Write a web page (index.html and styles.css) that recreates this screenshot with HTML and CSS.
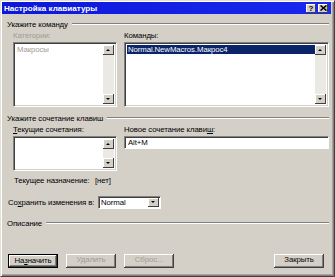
FILE: index.html
```html
<!DOCTYPE html>
<html lang="ru">
<head>
  <meta charset="UTF-8" />
  <title>Настройка клавиатуры</title>
  <link rel="stylesheet" href="styles.css">
</head>
<body>
  <div class="dialog">
    <div class="titlebar">
      <span class="title">Настройка клавиатуры</span>
      <div class="title-buttons">
        <span class="tbtn">?</span>
        <span class="tbtn close">
          <svg width="7" height="6" viewBox="0 0 7 6"><path d="M0.5 0.5L6.5 5.5M6.5 0.5L0.5 5.5" stroke="#000" stroke-width="1.6"/></svg>
        </span>
      </div>
    </div>

    <div class="content">
      <div class="group-head"><span>Укажите команду</span><i class="etch"></i></div>
      <div class="pair">
        <div class="col left">
          <div class="label disabled">Категории:</div>
          <div class="listbox tall">
            <div class="items"><div class="item disabled">Макросы</div></div>
            <div class="vscroll"><span class="arrow up"></span><span class="arrow down"></span></div>
          </div>
        </div>
        <div class="col right">
          <div class="label">Коман<u>д</u>ы:</div>
          <div class="listbox tall">
            <div class="items"><div class="item selected">Normal.NewMacros.Макрос4</div></div>
            <div class="vscroll"><span class="arrow up"></span><span class="arrow down"></span></div>
          </div>
        </div>
      </div>

      <div class="group-head second"><span>Укажите сочетание клавиш</span><i class="etch"></i></div>
      <div class="pair">
        <div class="col left">
          <div class="label"><u>Т</u>екущие сочетания:</div>
          <div class="listbox short">
            <div class="items"></div>
            <div class="vscroll"><span class="arrow up"></span><span class="arrow down"></span></div>
          </div>
        </div>
        <div class="col right">
          <div class="label">Новое сочетание клави<u>ш</u>:</div>
          <div class="textbox">Alt+M</div>
        </div>
      </div>
      <div class="assign"><span class="assign-label">Текущее назначение:</span><span>[нет]</span></div>

      <div class="save-row">
        <span class="save-label">Со<u>х</u>ранить изменения в:</span>
        <div class="select"><span>Normal</span><span class="drop"><span class="arrow down"></span></span></div>
      </div>

      <div class="group-head third"><span>Описание</span><i class="etch"></i></div>

      <div class="buttons">
        <span class="btn default">На<u>з</u>начить</span>
        <span class="btn disabled">Удалить</span>
        <span class="btn disabled">Сброс...</span>
        <span class="spacer"></span>
        <span class="btn">Закрыть</span>
      </div>
    </div>
  </div>
</body>
</html>
```

FILE: styles.css
```css
* {
  margin: 0;
  padding: 0;
  box-sizing: border-box;
}

body {
  font-family: 'Liberation Sans', Arial, sans-serif;
  font-size: 7.8px;
  letter-spacing: -0.1px;
  color: #000;
  background: #d4d0c8;
  white-space: nowrap;
}

u {
  text-decoration: underline;
}

.dialog {
  width: 335px;
  height: 277px;
  background: #d4d0c8;
  border: 1px solid;
  border-color: #e4e0d8 #404040 #404040 #e4e0d8;
  box-shadow: inset 1px 1px #fff, inset -1px -1px #808080, inset -2px -2px #a8a49c;
  padding: 1px 3px 3px 1px;
  display: flex;
  flex-direction: column;
}

.titlebar {
  height: 12px;
  background: linear-gradient(90deg, #0c18d8, #1a28f0);
  color: #fff;
  display: flex;
  align-items: center;
  justify-content: space-between;
  padding: 0 3px 0 2px;
}

.title {
  font-weight: bold;
  font-size: 8.1px;
  letter-spacing: 0;
}

.title-buttons {
  display: flex;
  gap: 2px;
}

.tbtn {
  width: 10px;
  height: 9px;
  background: #d4d0c8;
  color: #000;
  font-weight: bold;
  font-size: 8px;
  line-height: 9px;
  text-align: center;
  display: flex;
  align-items: center;
  justify-content: center;
  box-shadow: inset -1px -1px #404040, inset 1px 1px #fff;
}

.content {
  flex: 1;
  padding: 0 2px 0 5px;
  display: flex;
  flex-direction: column;
}

.group-head {
  height: 10px;
  margin-top: 5px;
  display: flex;
  align-items: center;
  gap: 4px;
}

.group-head.second {
  margin-top: 6px;
}

.group-head.third {
  margin-top: 9px;
}

.etch {
  flex: 1;
  height: 2px;
  border-top: 1px solid #808080;
  border-bottom: 1px solid #fff;
}

.pair {
  display: flex;
  gap: 7px;
  padding-left: 6px;
  margin-top: 2px;
}

.col.left {
  width: 104px;
  flex-shrink: 0;
}

.col.right {
  flex: 1;
}

.label {
  height: 10px;
  line-height: 10px;
  margin-bottom: 1px;
}

.disabled {
  color: #a09c94;
}

.listbox {
  display: flex;
  background: #fff;
  border: 1px solid;
  border-color: #808080 #fff #fff #808080;
  box-shadow: inset 1px 1px #404040, inset -1px -1px #d4d0c8;
  padding: 2px;
}

.listbox.tall {
  height: 65px;
}

.listbox.short {
  height: 35px;
}

.items {
  flex: 1;
}

.item {
  height: 9px;
  line-height: 9px;
  padding-left: 1px;
}

.item.selected {
  background: #0a246a;
  color: #fff;
}

.vscroll {
  width: 11px;
  background: #ebe9e4;
  display: flex;
  flex-direction: column;
  justify-content: space-between;
}

.arrow {
  display: block;
  width: 11px;
  height: 10px;
  background: #d4d0c8;
  box-shadow: inset -1px -1px #404040, inset 1px 1px #fff;
  position: relative;
}

.arrow::after {
  content: '';
  position: absolute;
  left: 3px;
  top: 4px;
  border-left: 2px solid transparent;
  border-right: 2px solid transparent;
}

.arrow.up::after {
  border-bottom: 2px solid #000;
}

.arrow.down::after {
  border-top: 2px solid #000;
}

.textbox {
  height: 13px;
  line-height: 11px;
  background: #fff;
  border: 1px solid;
  border-color: #808080 #fff #fff #808080;
  box-shadow: inset 1px 1px #404040;
  padding-left: 3px;
}

.assign {
  margin-top: 5px;
  padding-left: 7px;
  height: 10px;
  line-height: 10px;
  display: flex;
}

.assign-label {
  width: 81px;
  flex-shrink: 0;
}

.save-row {
  margin-top: 10px;
  display: flex;
  align-items: center;
  padding-left: 1px;
}

.save-label {
  width: 90px;
  flex-shrink: 0;
}

.select {
  width: 63px;
  height: 13px;
  background: #fff;
  border: 1px solid;
  border-color: #808080 #fff #fff #808080;
  box-shadow: inset 1px 1px #404040;
  display: flex;
  align-items: center;
  justify-content: space-between;
  padding: 0 1px 0 2px;
}

.drop .arrow {
  width: 11px;
  height: 9px;
}

.drop .arrow::after {
  top: 3px;
}

.buttons {
  margin-top: auto;
  margin-bottom: 5px;
  display: flex;
  gap: 8px;
  padding-left: 1px;
  padding-right: 5px;
}

.btn {
  width: 50px;
  height: 14px;
  line-height: 12px;
  text-align: center;
  background: #d4d0c8;
  box-shadow: inset -1px -1px #404040, inset 1px 1px #fff, inset -2px -2px #808080;
}

.btn.default {
  border: 1px solid #000;
  line-height: 12px;
}

.btn.disabled {
  color: #a09c94;
}

.spacer {
  flex: 1;
}
```
